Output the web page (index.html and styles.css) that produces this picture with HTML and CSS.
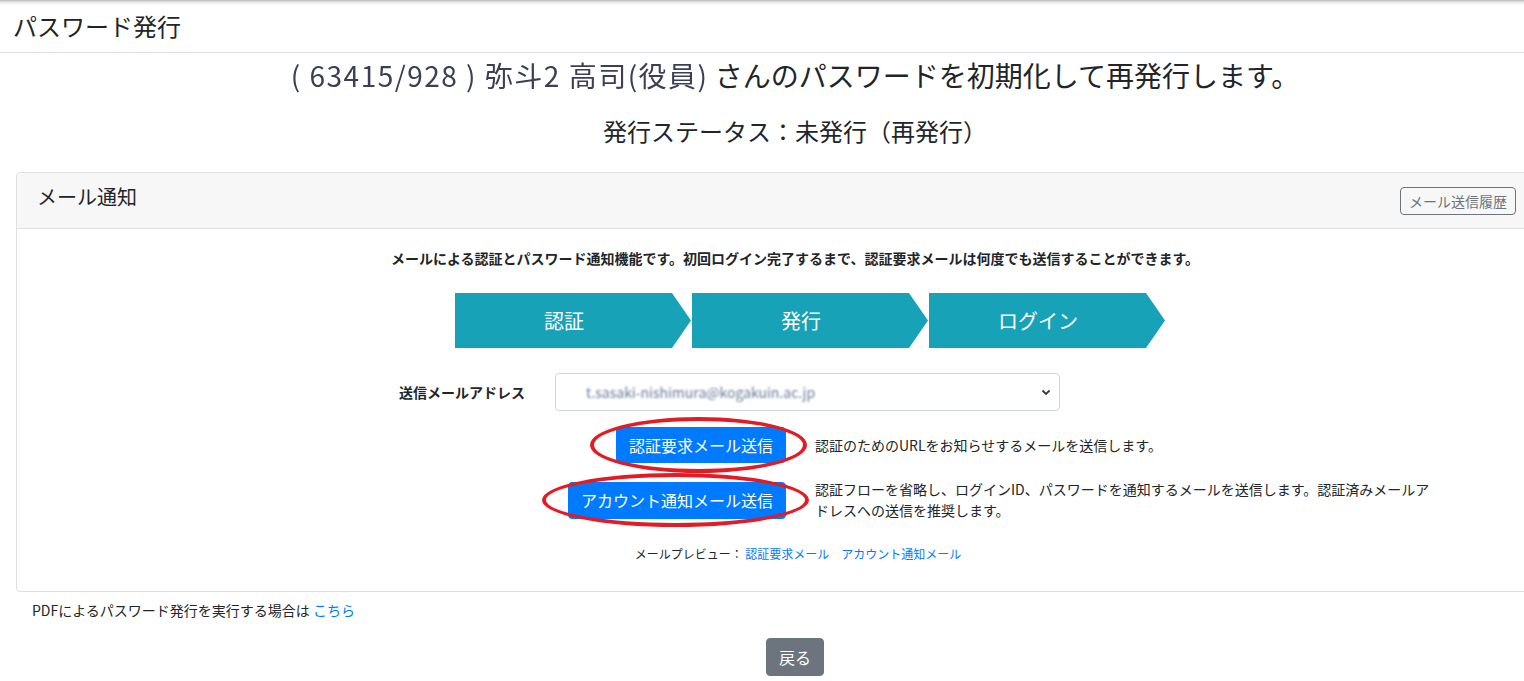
FILE: index.html
```html
<!DOCTYPE html>
<html lang="ja">
  <head>
    <meta charset="UTF-8" />
    <meta name="viewport" content="width=device-width, initial-scale=1.0" />
    <title>パスワード発行</title>
    <link rel="stylesheet" href="styles.css">
  </head>
  <body>
    <header class="page-header">
      <h1>パスワード発行</h1>
    </header>

    <div class="page">
      <h3 class="target-user"><span class="masked">( 63415/928 ) 弥斗2 高司(役員)</span> さんのパスワードを初期化して再発行します。</h3>
      <h4 class="status">発行ステータス：未発行（再発行）</h4>

      <div class="card">
        <div class="card-header">
          <h5>メール通知</h5>
          <button class="btn btn-outline-sm">メール送信履歴</button>
        </div>
        <div class="card-body">
          <p class="lead-text">メールによる認証とパスワード通知機能です。初回ログイン完了するまで、認証要求メールは何度でも送信することができます。</p>

          <div class="steps">
            <div class="step">認証</div>
            <div class="step">発行</div>
            <div class="step">ログイン</div>
          </div>

          <div class="mail-form">
            <label class="form-label" for="mail-address">送信メールアドレス</label>
            <div class="select-box">
              <span class="select-value">t.sasaki-nishimura@kogakuin.ac.jp</span>
              <svg class="select-arrow" width="10" height="8" viewBox="0 0 10 8">
                <path d="M1.5 2.5 L5 6 L8.5 2.5" fill="none" stroke="#343a40" stroke-width="1.8" />
              </svg>
            </div>

            <div class="btn-cell">
              <span class="marked">
                <button class="btn btn-primary">認証要求メール送信</button>
              </span>
            </div>
            <div class="btn-desc">認証のためのURLをお知らせするメールを送信します。</div>

            <div class="btn-cell">
              <span class="marked marked-wide">
                <button class="btn btn-primary">アカウント通知メール送信</button>
              </span>
            </div>
            <div class="btn-desc">認証フローを省略し、ログインID、パスワードを通知するメールを送信します。認証済みメールアドレスへの送信を推奨します。</div>
          </div>

          <p class="preview">メールプレビュー： <a href="#">認証要求メール</a><a href="#">アカウント通知メール</a></p>
        </div>
      </div>

      <p class="pdf-link">PDFによるパスワード発行を実行する場合は <a href="#">こちら</a></p>

      <div class="back">
        <button class="btn btn-secondary">戻る</button>
      </div>
    </div>
  </body>
</html>
```

FILE: styles.css
```css
html {
  overflow-x: hidden;
}

body {
  margin: 0;
  font-family: "Noto Sans CJK JP", "Noto Sans", sans-serif;
  color: #212529;
  background: #fff;
}

h1, h3, h4, h5, p {
  margin: 0;
  font-weight: normal;
}

a {
  color: #007bff;
  text-decoration: none;
}

button {
  font-family: inherit;
  margin: 0;
  cursor: pointer;
}

.page-header {
  height: 53px;
  box-sizing: border-box;
  display: flex;
  align-items: center;
  padding-left: 13px;
  border-bottom: 1px solid #dee2e6;
  background: linear-gradient(#b9b9b9 0, #e6e6e6 2px, #fff 5px);
}

.page-header h1 {
  font-size: 24px;
  line-height: 30px;
}

.page {
  width: 1558px;
  margin-left: 16px;
}

.target-user {
  margin-top: 5px;
  font-size: 28px;
  line-height: 34px;
  text-align: center;
}

.masked {
  color: #3a3f55;
  letter-spacing: 1.5px;
  filter: blur(0.6px);
}

.status {
  margin-top: 24px;
  font-size: 24px;
  line-height: 30px;
  text-align: center;
}

.card {
  margin-top: 26px;
  border: 1px solid #dfdfdf;
  border-radius: 4px;
}

.card-header {
  height: 55px;
  display: flex;
  justify-content: space-between;
  align-items: center;
  padding: 0 57px 0 20px;
  background: #f7f7f7;
  border-bottom: 1px solid #dfdfdf;
  border-radius: 4px 4px 0 0;
}

.card-header h5 {
  align-self: flex-start;
  padding-top: 11px;
  font-size: 20px;
  line-height: 26px;
}

.btn {
  border: 1px solid transparent;
  border-radius: 4px;
  font-size: 16px;
  line-height: 24px;
  padding: 5px 12px;
}

.btn-outline-sm {
  font-size: 14px;
  line-height: 20px;
  padding: 3px 8px;
  color: #6c757d;
  background: transparent;
  border-color: #6c757d;
}

.btn-primary {
  color: #fff;
  background: #007bff;
  border-color: #007bff;
}

.btn-secondary {
  color: #fff;
  background: #6c757d;
  border-color: #6c757d;
  padding: 6px 12px;
}

.card-body {
  padding: 19px 0 28px;
}

.lead-text {
  font-size: 14px;
  font-weight: bold;
  line-height: 20px;
  text-align: center;
}

.steps {
  display: flex;
  gap: 1px;
  margin-top: 25px;
  padding-left: 438px;
}

.step {
  width: 236px;
  height: 55px;
  box-sizing: border-box;
  padding-right: 18px;
  display: flex;
  align-items: center;
  justify-content: center;
  background: #18a2b8;
  color: #fff;
  font-size: 20px;
  clip-path: polygon(0 0, calc(100% - 19px) 0, 100% 50%, calc(100% - 19px) 100%, 0 100%);
}

.mail-form {
  display: grid;
  grid-template-columns: 156px 260px 275px 364px;
  align-items: center;
  row-gap: 16px;
  margin: 25px 0 0 367px;
}

.form-label {
  padding-left: 15px;
  font-size: 14px;
  font-weight: bold;
}

.select-box {
  grid-column: 2 / 4;
  margin: 0 15px;
  height: 38px;
  box-sizing: border-box;
  display: flex;
  align-items: center;
  justify-content: space-between;
  padding: 0 8px 0 30px;
  border: 1px solid #ced4da;
  border-radius: 4px;
  font-size: 14px;
}

.select-value {
  color: #6b7a9a;
  filter: blur(1.2px);
}

.btn-cell {
  grid-column: 1 / 3;
  display: flex;
  justify-content: flex-end;
  padding-right: 14px;
}

.btn-cell .btn {
  height: 36px;
}

.marked {
  position: relative;
  display: inline-block;
}

.marked::after {
  content: "";
  position: absolute;
  inset: -10px -21px -10px -26px;
  border: 4px solid #e31b24;
  border-radius: 50%;
  pointer-events: none;
}

.marked-wide::after {
  inset: -9px -23px -8px -26px;
}

.marked-wide .btn {
  height: 37px;
}

.btn-desc {
  grid-column: 3 / 5;
  padding-left: 15px;
  font-size: 14px;
  line-height: 21px;
}

.preview {
  margin-top: 24px;
  padding-left: 6px;
  font-size: 12px;
  line-height: 18px;
  text-align: center;
}

.preview a {
  margin-right: 12px;
}

.preview a:last-child {
  margin-right: 0;
}

.pdf-link {
  margin: 8px 0 0 16px;
  font-size: 14px;
  line-height: 20px;
}

.back {
  margin-top: 18px;
  text-align: center;
}
```
